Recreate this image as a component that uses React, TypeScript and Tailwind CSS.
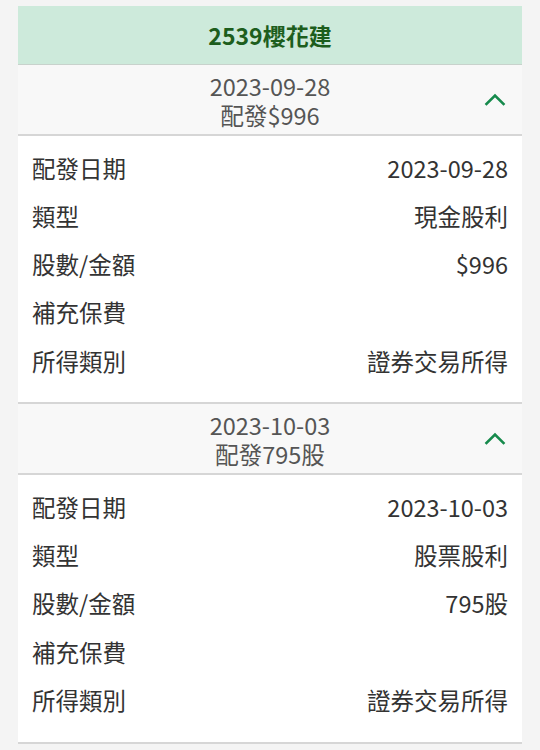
const font = { fontFamily: '"Noto Sans CJK TC", "Noto Sans", sans-serif' };

type Row = { label: string; value: string };

const sections: { date: string; summary: string; rows: Row[] }[] = [
  {
    date: "2023-09-28",
    summary: "配發$996",
    rows: [
      { label: "配發日期", value: "2023-09-28" },
      { label: "類型", value: "現金股利" },
      { label: "股數/金額", value: "$996" },
      { label: "補充保費", value: "" },
      { label: "所得類別", value: "證券交易所得" },
    ],
  },
  {
    date: "2023-10-03",
    summary: "配發795股",
    rows: [
      { label: "配發日期", value: "2023-10-03" },
      { label: "類型", value: "股票股利" },
      { label: "股數/金額", value: "795股" },
      { label: "補充保費", value: "" },
      { label: "所得類別", value: "證券交易所得" },
    ],
  },
];

function ChevronUp() {
  return (
    <svg width="22" height="14" viewBox="0 0 22 14" fill="none">
      <path d="M2.5 12 L11 3.5 L19.5 12" stroke="#168a4c" strokeWidth="2.6" strokeLinecap="square" />
    </svg>
  );
}

export default function App() {
  return (
    <div className="min-h-[750px] bg-[#f4f4f4] pt-[6px] px-[18px]" style={font}>
      <div className="bg-white">
        <div className="h-[59px] bg-[#cdeadb] flex items-center justify-center border-b border-[#c8d2cc]">
          <span className="text-[23px] font-bold text-[#1d5e1d]">2539櫻花建</span>
        </div>
        {sections.map((s) => (
          <div key={s.date} className="border-b-2 border-[#d6d6d6]">
            <div className="relative h-[71px] pt-[2px] bg-[#f8f8f8] border-b-2 border-[#d6d6d6] flex items-center justify-center">
              <p className="text-center text-[23.5px] leading-[29px] text-[#555555]">
                {s.date}
                <br />
                {s.summary}
              </p>
              <div className="absolute right-[16px] top-[27px]">
                <ChevronUp />
              </div>
            </div>
            <div className="px-[14px] pt-[8px] pb-[17px]">
              {s.rows.map((r) => (
                <div key={r.label} className="h-[48.25px] flex items-center justify-between text-[23.5px] text-[#333333]">
                  <span>{r.label}</span>
                  <span>{r.value}</span>
                </div>
              ))}
            </div>
          </div>
        ))}
      </div>
    </div>
  );
}
